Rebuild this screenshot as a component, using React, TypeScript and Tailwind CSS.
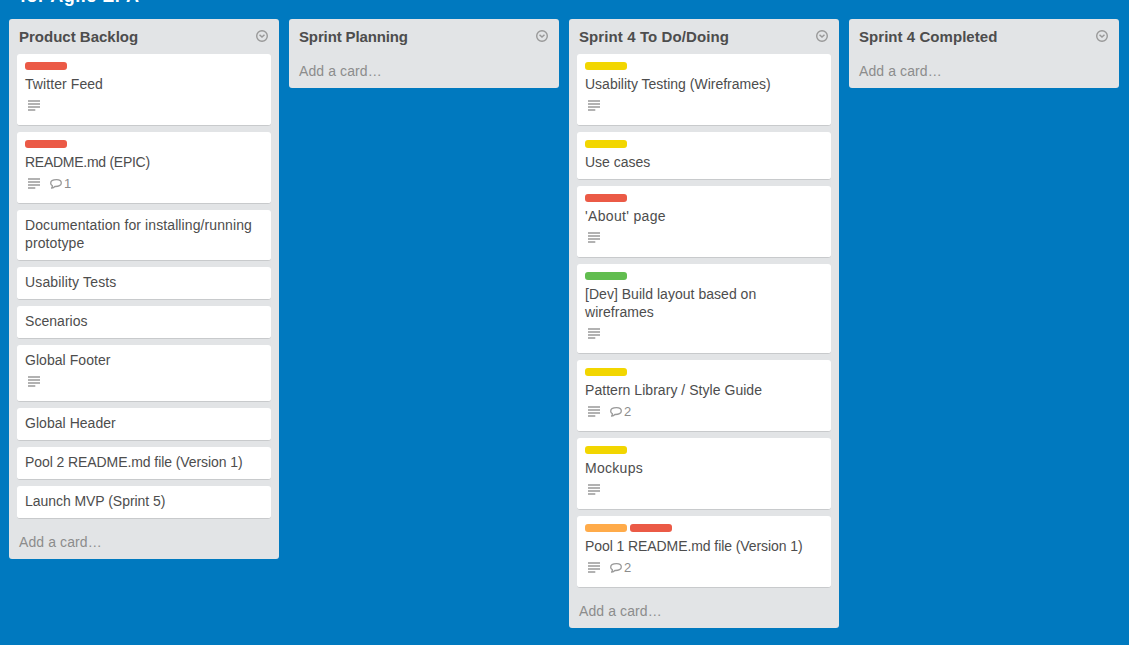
type Card = { title: string; track?: string; labels?: string[]; description?: boolean; comments?: number };
type List = { title: string; track?: string; cards: Card[] };

const RED = 'bg-[#eb5a46]';
const YELLOW = 'bg-[#f2d600]';
const GREEN = 'bg-[#61bd4f]';
const ORANGE = 'bg-[#ffab4a]';

const lists: List[] = [
  {
    title: 'Product Backlog',
    cards: [
      { title: 'Twitter Feed', track: 'tracking-[0.08px]', labels: [RED], description: true },
      { title: 'README.md (EPIC)', track: 'tracking-[-0.27px]', labels: [RED], description: true, comments: 1 },
      { title: 'Documentation for installing/running prototype', track: 'tracking-[0.1px]' },
      { title: 'Usability Tests', track: 'tracking-[0.15px]' },
      { title: 'Scenarios', track: 'tracking-[0.04px]' },
      { title: 'Global Footer', track: 'tracking-[0.05px]', description: true },
      { title: 'Global Header', track: 'tracking-[0.04px]' },
      { title: 'Pool 2 README.md file (Version 1)', track: 'tracking-[-0.08px]' },
      { title: 'Launch MVP (Sprint 5)', track: 'tracking-[-0.05px]' },
    ],
  },
  { title: 'Sprint Planning', track: 'tracking-[-0.13px]', cards: [] },
  {
    title: 'Sprint 4 To Do/Doing',
    track: 'tracking-[0.1px]',
    cards: [
      { title: 'Usability Testing (Wireframes)', labels: [YELLOW], description: true },
      { title: 'Use cases', labels: [YELLOW] },
      { title: "'About' page", track: 'tracking-[0.33px]', labels: [RED], description: true },
      { title: '[Dev] Build layout based on wireframes', track: 'tracking-[0.03px]', labels: [GREEN], description: true },
      { title: 'Pattern Library / Style Guide', track: 'tracking-[0.04px]', labels: [YELLOW], description: true, comments: 2 },
      { title: 'Mockups', track: 'tracking-[0.28px]', labels: [YELLOW], description: true },
      { title: 'Pool 1 README.md file (Version 1)', track: 'tracking-[-0.08px]', labels: [ORANGE, RED], description: true, comments: 2 },
    ],
  },
  { title: 'Sprint 4 Completed', track: 'tracking-[0.05px]', cards: [] },
];

function MenuIcon() {
  return (
    <svg className="mt-[11px] size-3 text-[#999]" viewBox="0 0 12 12" fill="none" stroke="currentColor">
      <circle cx="6" cy="6" r="5.3" strokeWidth="1.4" />
      <path d="M3.5 4.8 6 7.1l2.5-2.3" strokeWidth="1.5" />
    </svg>
  );
}

function DescriptionIcon() {
  return (
    <svg className="h-3 w-3" viewBox="0 0 12 12" fill="currentColor">
      <path d="M0 .3h12v1.4H0zM0 3.3h12v1.4H0zM0 6.3h12v1.4H0zM0 9.3h7.3v1.4H0z" />
    </svg>
  );
}

function CommentIcon() {
  return (
    <svg className="h-3 w-3" viewBox="0 0 12 12" fill="none" stroke="currentColor" strokeWidth="1.3" strokeLinejoin="round">
      <path d="M6.6 1.7C3.3 1.7.7 3 .7 5.2c0 1.1.6 1.9 1.7 2.5 0 .9-.3 1.700-.8 2.500 1.400-.3 2.500-.9 3.200-1.700 3.800.2 6.500-1.200 6.500-3.600 0-2-1.800-3.200-4.700-3.200Z" />
    </svg>
  );
}

function CardView({ card }: { card: Card }) {
  return (
    <div className="rounded-[3px] border-b border-[#c8cacc] bg-white px-2 pt-[6px] pb-2">
      {card.labels && (
        <div className="flex h-[15px] gap-[3px] pt-[2px]">
          {card.labels.map((c) => (
            <span key={c} className={`h-2 w-[42px] rounded-[3px] ${c}`} />
          ))}
        </div>
      )}
      <div className={`text-[14px] leading-[18px] text-[#4d4d4d] ${card.track ?? ''}`}>{card.title}</div>
      {card.description && (
        <div className="flex h-6 items-start gap-[10px] pt-[7px] pl-[3px] text-[#999]">
          <DescriptionIcon />
          {card.comments && (
            <span className="flex items-start gap-[2px]">
              <CommentIcon />
              <span className="text-[13px] leading-[12px] text-[#8c8c8c]">{card.comments}</span>
            </span>
          )}
        </div>
      )}
    </div>
  );
}

function ListView({ list }: { list: List }) {
  return (
    <section className="w-[270px] shrink-0 rounded-[3px] bg-[#e2e4e6]">
      <header className="flex h-[35px] items-start justify-between pr-[11px] pl-[10px]">
        <h2 className={`pt-[9px] text-[15px] leading-[18px] font-bold text-[#4d4d4d] ${list.track ?? ''}`}>{list.title}</h2>
        <MenuIcon />
      </header>
      <div className="flex flex-col px-2">
        {list.cards.map((card) => (
          <div key={card.title} className="pb-[6px]">
            <CardView card={card} />
          </div>
        ))}
      </div>
      <div className="h-[34px] pt-2 pl-[10px] text-[14px] leading-[18px] tracking-[0.1px] text-[#8c8c8c]">Add a card…</div>
    </section>
  );
}

export default function App() {
  return (
    <main className="flex h-[645px] w-[1129px] flex-col overflow-hidden bg-[#0079bf] font-['Liberation_Sans',Arial,sans-serif]">
      <div className="flex h-[19px] shrink-0 items-start pl-5">
        <h1 className="-mt-[14px] text-[18px] leading-[20px] font-bold tracking-[0.5px] text-white">for Agile EPA</h1>
      </div>
      <div className="flex items-start gap-[10px] pl-[9px]">
        {lists.map((l) => (
          <ListView key={l.title} list={l} />
        ))}
      </div>
    </main>
  );
}
